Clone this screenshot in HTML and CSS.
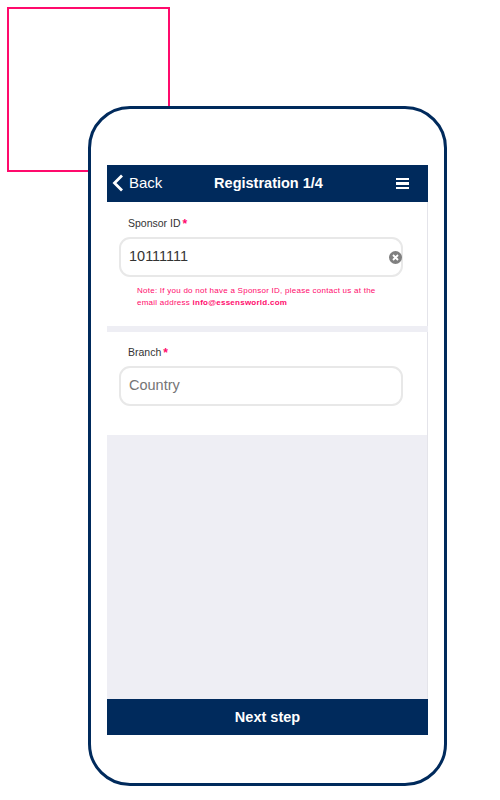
FILE: index.html

```html
<!DOCTYPE html>
<html lang="en">
<head>
  <meta charset="UTF-8" />
  <title>Registration 1/4</title>
  <link rel="stylesheet" href="styles.css">
</head>
<body>
  <div class="stage">
    <div class="deco-square"></div>
    <div class="phone">
      <div class="screen">
        <div class="topbar">
          <div class="back">
            <svg class="back-icon" width="12" height="18" viewBox="0 0 12 18"><path d="M10 1.5 2.5 9l7.5 7.5" fill="none" stroke="#fff" stroke-width="2.8"/></svg>
            <span>Back</span>
          </div>
          <div class="title">Registration 1/4</div>
          <div class="burger"><i></i><i></i><i></i></div>
        </div>

        <div class="section section-sponsor">
          <label class="field-label">Sponsor ID <span class="req">*</span></label>
          <div class="input">
            <span class="value">10111111</span>
            <svg class="clear" width="13" height="13" viewBox="0 0 13 13"><circle cx="6.5" cy="6.5" r="6.5" fill="#808080"/><path d="M4 4l5 5M9 4 4 9" stroke="#fff" stroke-width="1.8"/></svg>
          </div>
          <p class="note">Note: If you do not have a Sponsor ID, please contact us at the<br>email address <strong>info@essensworld.com</strong></p>
        </div>

        <div class="section section-branch">
          <label class="field-label">Branch <span class="req">*</span></label>
          <div class="input">
            <span class="placeholder">Country</span>
          </div>
        </div>

        <div class="filler"></div>
        <div class="next">Next step</div>
      </div>
    </div>
  </div>
</body>
</html>
```

FILE: styles.css

```css
html, body { margin: 0; padding: 0; background-color: #fff; }
body { font-family: "Liberation Sans", Arial, sans-serif; }

.stage { position: relative; width: 500px; height: 800px; overflow: hidden; padding: 106px 0 0 88px; box-sizing: border-box; }
.deco-square {
  position: absolute; left: 7px; top: 7px; width: 163px; height: 165px;
  box-sizing: border-box; border: 2px solid #ff0a6c;
}

.phone {
  position: relative; width: 359px; height: 680px; box-sizing: border-box;
  padding: 56px 16px 48px 16px; background-color: #fff;
  border: 3px solid #002a5c; border-radius: 42px;
}
.screen { display: flex; flex-direction: column; height: 100%; background-color: #eeeef4; }

.topbar {
  display: grid; grid-template-columns: 1fr auto 1fr; align-items: center;
  height: 37px; padding: 0 19px 2px 5px; box-sizing: border-box; background-color: #002a5c; color: #fff;
}
.back { display: flex; align-items: center; gap: 5px; font-size: 15px; }
.back-icon { display: block; }
.title { font-size: 14.5px; font-weight: bold; margin-left: 16px; }
.burger { display: flex; flex-direction: column; gap: 2px; justify-self: end; margin-top: 2px; }
.burger i { display: block; width: 13px; height: 2.5px; background-color: #fff; }

.section { box-sizing: border-box; padding: 0 24px 0 12px; background-color: #fff; border-right: 1px solid #e4e4ea; }
.section-sponsor { height: 124px; padding-top: 15px; margin-bottom: 6px; }
.section-branch { height: 103px; padding-top: 14px; }

.field-label { display: block; height: 20px; padding-left: 9px; font-size: 10.5px; line-height: 12px; color: #333; }
.req { color: #ff0a6c; font-weight: bold; font-size: 12px; line-height: 10px; margin-left: -1px; position: relative; top: 1px; }

.input {
  display: flex; align-items: center; justify-content: space-between;
  box-sizing: border-box; height: 40px; padding: 0 0 2px 8px;
  border: 2px solid #e8e8e8; border-radius: 11px; background-color: #fff;
  font-size: 14.5px;
}
.value { color: #333; }
.placeholder { color: #757575; }
.clear { display: block; margin: 2px -1px 0 0; }

.note { margin: 8px 0 0 18px; font-size: 8px; line-height: 12px; letter-spacing: 0.25px; color: #ff0a6c; }

.filler { flex: 1; border-right: 1px solid #e4e4ea; }
.next {
  height: 36px; line-height: 36px; text-align: center;
  background-color: #002a5c; color: #fff; font-size: 14.5px; font-weight: bold;
}
```
